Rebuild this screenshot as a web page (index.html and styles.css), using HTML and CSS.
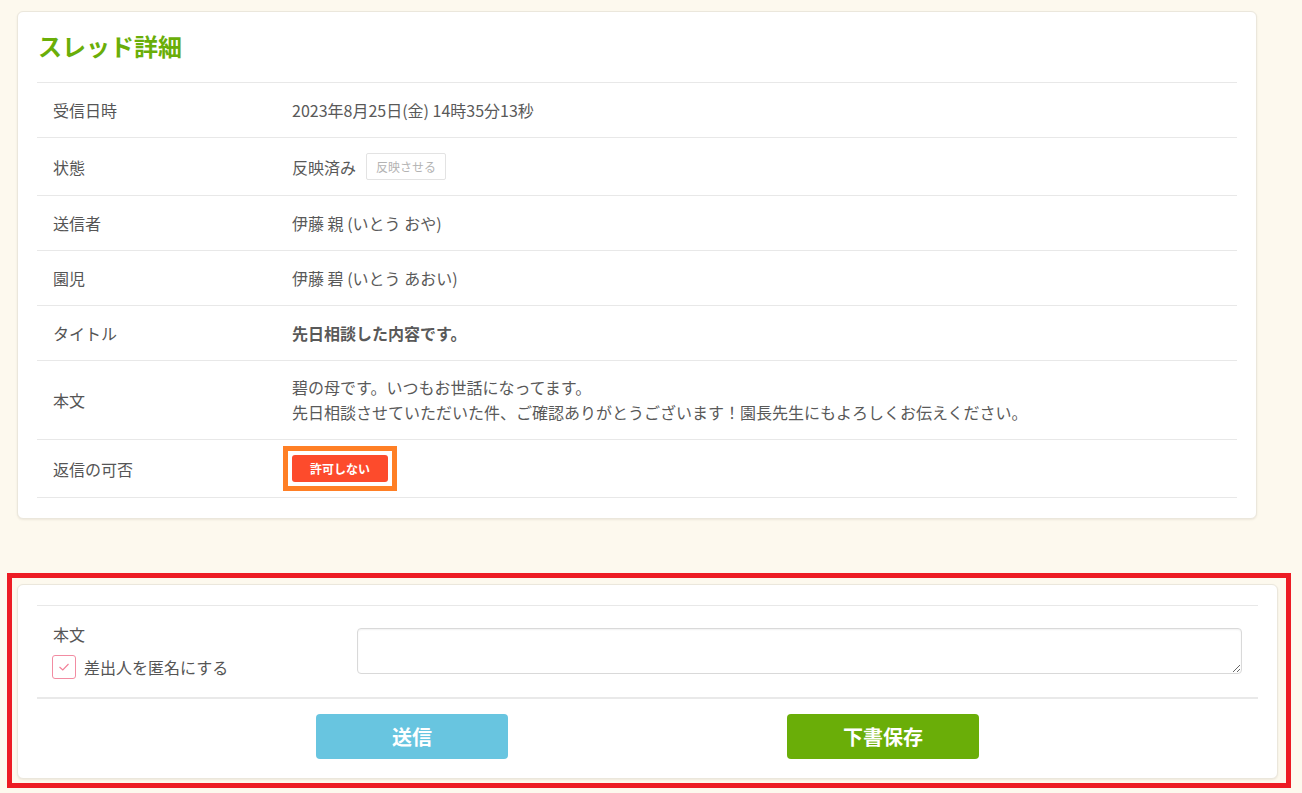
FILE: index.html
```html
<!DOCTYPE html>
<html lang="ja">
<head>
<meta charset="utf-8">
<title>スレッド詳細</title>
<link rel="stylesheet" href="styles.css">
</head>
<body>
<div class="page">
  <section class="card detail-card">
    <h2 class="card-title">スレッド詳細</h2>
    <div class="detail-table">
      <div class="detail-row">
        <div class="detail-label">受信日時</div>
        <div class="detail-value">2023年8月25日(金) 14時35分13秒</div>
      </div>
      <div class="detail-row">
        <div class="detail-label">状態</div>
        <div class="detail-value">反映済み<button class="btn-ghost" type="button">反映させる</button></div>
      </div>
      <div class="detail-row">
        <div class="detail-label">送信者</div>
        <div class="detail-value">伊藤 親 (いとう おや)</div>
      </div>
      <div class="detail-row">
        <div class="detail-label">園児</div>
        <div class="detail-value">伊藤 碧 (いとう あおい)</div>
      </div>
      <div class="detail-row">
        <div class="detail-label">タイトル</div>
        <div class="detail-value strong">先日相談した内容です。</div>
      </div>
      <div class="detail-row">
        <div class="detail-label">本文</div>
        <div class="detail-value body-text">碧の母です。いつもお世話になってます。<br>先日相談させていただいた件、ご確認ありがとうございます！園長先生にもよろしくお伝えください。</div>
      </div>
      <div class="detail-row">
        <div class="detail-label">返信の可否</div>
        <div class="detail-value"><span class="mark-frame"><span class="badge-deny">許可しない</span></span></div>
      </div>
    </div>
  </section>

  <div class="highlight-frame">
    <section class="card reply-card">
      <div class="reply-row">
        <div class="reply-side">
          <div class="reply-label">本文</div>
          <label class="check-line">
            <span class="checkbox"><svg width="12" height="10" viewBox="0 0 12 10"><polyline points="1.5,5 4.8,8 10.5,2" fill="none" stroke="#f27f97" stroke-width="1.1"/></svg></span>
            差出人を匿名にする
          </label>
        </div>
        <div class="reply-field">
          <textarea class="reply-text"></textarea>
        </div>
      </div>
      <div class="reply-actions">
        <button class="btn btn-send" type="button">送信</button>
        <button class="btn btn-draft" type="button">下書保存</button>
      </div>
    </section>
  </div>
</div>
</body>
</html>
```

FILE: styles.css
```css
* {
  box-sizing: border-box;
}

html, body {
  margin: 0;
  padding: 0;
}

body {
  background: #fdf9ee;
  font-family: "Noto Sans CJK JP", "Noto Sans", sans-serif;
  color: #555555;
  font-size: 16px;
}

.page {
  padding: 11px 0 0 7px;
}

.card {
  background: #ffffff;
  border: 1px solid #ebe7dc;
  border-radius: 6px;
  box-shadow: 0 1px 2px rgba(120, 110, 80, 0.12);
}

.detail-card {
  margin-left: 10px;
  width: 1240px;
  padding: 19px 19px 20px;
}

.card-title {
  margin: 0;
  font-size: 24px;
  line-height: 29px;
  font-weight: 700;
  color: #6aae08;
  padding-left: 1px;
  padding-bottom: 22px;
  border-bottom: 1px solid #e8e8e8;
}

.detail-row {
  display: grid;
  grid-template-columns: 255px 1fr;
  align-items: center;
  padding: 14px 0;
  border-bottom: 1px solid #e8e8e8;
  line-height: 26px;
}

.detail-label {
  padding-left: 16px;
  font-size: 16px;
  color: #555555;
}

.detail-value {
  display: flex;
  align-items: center;
  font-size: 16px;
  color: #595959;
}

.detail-value.strong {
  font-weight: 700;
}

.detail-value.body-text {
  display: block;
  line-height: 25px;
}

.btn-ghost {
  margin: 1px 0 1px 10px;
  height: 27px;
  width: 80px;
  padding: 0;
  background: #ffffff;
  border: 1px solid #e3e3e3;
  border-radius: 2px;
  font-family: inherit;
  font-size: 12px;
  color: #b3b3b3;
}

.mark-frame {
  display: inline-flex;
  margin: 1px 0;
  outline: 5px solid #ff7f25;
  outline-offset: 4px;
}

.badge-deny {
  display: inline-flex;
  align-items: center;
  justify-content: center;
  width: 96px;
  height: 27px;
  background: #fd4b2c;
  color: #ffffff;
  font-size: 12px;
  font-weight: 700;
  border-radius: 3px;
}

.highlight-frame {
  margin-top: 54px;
  width: 1284px;
  border: 5px solid #ed1c24;
  padding: 6px 8px 4px 5px;
}

.reply-card {
  width: 1261px;
  padding: 20px 19px 19px;
}

.reply-row {
  display: grid;
  grid-template-columns: 304px 1fr;
  align-items: center;
  border-top: 1px solid #e8e8e8;
  border-bottom: 2px solid #e9e9e9;
  padding: 16px 16px 18px;
}

.reply-side {
  display: flex;
  flex-direction: column;
}

.reply-label {
  font-size: 16px;
  line-height: 24px;
  color: #555555;
}

.check-line {
  display: flex;
  align-items: center;
  margin-top: 9px;
  font-size: 16px;
  color: #555555;
  gap: 8px;
  margin-left: -1px;
}

.checkbox {
  display: inline-flex;
  align-items: center;
  justify-content: center;
  width: 24px;
  height: 24px;
  border: 1px solid #f28ca2;
  border-radius: 3px;
  background: #ffffff;
}

.reply-field {
  display: flex;
}

.reply-text {
  display: block;
  width: 100%;
  height: 46px;
  border: 1px solid #d9d9d9;
  border-radius: 4px;
  box-shadow: inset 0 1px 2px rgba(0, 0, 0, 0.06);
  background: #ffffff;
  resize: vertical;
  font-family: inherit;
}

.reply-actions {
  display: flex;
  justify-content: center;
  gap: 279px;
  padding-top: 15px;
}

.btn {
  width: 192px;
  height: 45px;
  border: none;
  border-radius: 4px;
  color: #ffffff;
  font-family: inherit;
  font-size: 20px;
  font-weight: 700;
}

.btn-send {
  background: #68c5e0;
}

.btn-draft {
  background: #6aae08;
}
```
